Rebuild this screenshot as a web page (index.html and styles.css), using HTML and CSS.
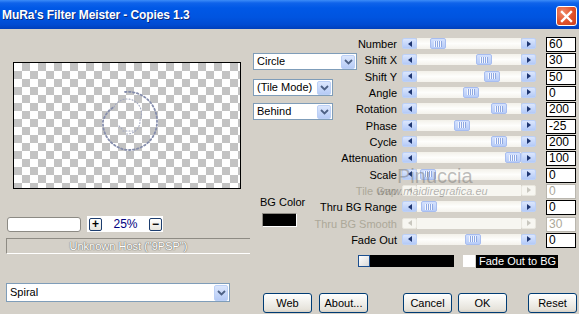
FILE: index.html
```html
<!DOCTYPE html>
<html>
<head>
<meta charset="utf-8">
<title>MuRa's Filter Meister - Copies 1.3</title>
<link rel="stylesheet" href="styles.css">
</head>
<body>
<div class="window">
  <div class="titlebar">
    <span class="title">MuRa's Filter Meister - Copies 1.3</span>
    <span class="close"><svg width="13" height="13" viewBox="0 0 13 13"><path d="M2 2 L11 11 M11 2 L2 11" stroke="#fff" stroke-width="2.4" stroke-linecap="square"/></svg></span>
  </div>
  <div class="client">
    <div class="leftcol">
      <div class="preview">
        <svg class="spiral" width="226" height="125" viewBox="0 0 226 125">
          <path d="M111 29 A29 29 0 0 1 143 58 A28 28 0 0 1 116 87 A27 27 0 0 1 89 58 A24 24 0 0 1 100 44" fill="none" stroke="#858dac" stroke-width="1.8" stroke-dasharray="1.6 2.4" stroke-linecap="round"/>
          <path d="M100 44 A14 14 0 0 1 126 57 A13 13 0 0 1 112 71 M105 63 L108 66 M109 68 L120 68" fill="none" stroke="#a2a8bf" stroke-width="1.1" stroke-dasharray="1 2" stroke-linecap="round"/>
        </svg>
      </div>
      <div class="zoomrow">
        <div class="field"></div>
        <div class="zoombox">
          <span class="zbtn">+</span>
          <span class="pct">25%</span>
          <span class="zbtn">&minus;</span>
        </div>
      </div>
      <div class="status">Unknown Host ("9PSP")</div>
      <div class="select spiralsel"><span class="seltext">Spiral</span><span class="dd"><svg width="9" height="6" viewBox="0 0 9 6"><path d="M1 1 L4.5 4.5 L8 1" fill="none" stroke="#4d6185" stroke-width="1.8"/></svg></span></div>
    </div>
    <div class="rightcol">
      <div class="upper">
        <div class="sliders">
          <div class="row"><span class="lbl">Number</span><div class="sb"><span class="arr l"></span><span class="track"><span class="thumb" style="margin-left:13px"></span></span><span class="arr r"></span></div><span class="val">60</span></div>
          <div class="row"><span class="lbl">Shift X</span><div class="sb"><span class="arr l"></span><span class="track"><span class="thumb" style="margin-left:59px"></span></span><span class="arr r"></span></div><span class="val">30</span></div>
          <div class="row"><span class="lbl">Shift Y</span><div class="sb"><span class="arr l"></span><span class="track"><span class="thumb" style="margin-left:67px"></span></span><span class="arr r"></span></div><span class="val">50</span></div>
          <div class="row"><span class="lbl">Angle</span><div class="sb"><span class="arr l"></span><span class="track"><span class="thumb" style="margin-left:46px"></span></span><span class="arr r"></span></div><span class="val">0</span></div>
          <div class="row"><span class="lbl">Rotation</span><div class="sb"><span class="arr l"></span><span class="track"><span class="thumb" style="margin-left:74px"></span></span><span class="arr r"></span></div><span class="val">200</span></div>
          <div class="row"><span class="lbl">Phase</span><div class="sb"><span class="arr l"></span><span class="track"><span class="thumb" style="margin-left:37px"></span></span><span class="arr r"></span></div><span class="val">-25</span></div>
          <div class="row"><span class="lbl">Cycle</span><div class="sb"><span class="arr l"></span><span class="track"><span class="thumb" style="margin-left:74px"></span></span><span class="arr r"></span></div><span class="val">200</span></div>
          <div class="row"><span class="lbl">Attenuation</span><div class="sb"><span class="arr l"></span><span class="track"><span class="thumb" style="margin-left:88px"></span></span><span class="arr r"></span></div><span class="val">100</span></div>
          <div class="row"><span class="lbl">Scale</span><div class="sb"><span class="arr l"></span><span class="track"><span class="thumb" style="margin-left:3px"></span></span><span class="arr r"></span></div><span class="val">0</span></div>
          <div class="row disabled"><span class="lbl">Tile Gap</span><div class="sb"><span class="arr l"></span><span class="track"></span><span class="arr r"></span></div><span class="val">0</span></div>
          <div class="row"><span class="lbl">Thru BG Range</span><div class="sb"><span class="arr l"></span><span class="track"><span class="thumb" style="margin-left:4px"></span></span><span class="arr r"></span></div><span class="val">0</span></div>
          <div class="row disabled"><span class="lbl">Thru BG Smooth</span><div class="sb"><span class="arr l"></span><span class="track"></span><span class="arr r"></span></div><span class="val">30</span></div>
          <div class="row"><span class="lbl">Fade Out</span><div class="sb"><span class="arr l"></span><span class="track"><span class="thumb" style="margin-left:48px"></span></span><span class="arr r"></span></div><span class="val">0</span></div>
        </div>
        <div class="selects">
          <div class="select circlesel"><span class="seltext">Circle</span><span class="dd"><svg width="9" height="6" viewBox="0 0 9 6"><path d="M1 1 L4.5 4.5 L8 1" fill="none" stroke="#4d6185" stroke-width="1.8"/></svg></span></div>
          <div class="select smallsel tilesel"><span class="seltext">(Tile Mode)</span><span class="dd"><svg width="9" height="6" viewBox="0 0 9 6"><path d="M1 1 L4.5 4.5 L8 1" fill="none" stroke="#4d6185" stroke-width="1.8"/></svg></span></div>
          <div class="select smallsel behindsel"><span class="seltext">Behind</span><span class="dd"><svg width="9" height="6" viewBox="0 0 9 6"><path d="M1 1 L4.5 4.5 L8 1" fill="none" stroke="#4d6185" stroke-width="1.8"/></svg></span></div>
          <div class="bgcolor">
            <span class="bglbl">BG Color</span>
            <span class="swatch"></span>
          </div>
        </div>
      </div>
      <div class="striprow">
        <div class="strip"><span class="stripsq"></span></div>
        <span class="check"></span>
        <span class="checklbl">Fade Out to BG</span>
      </div>
      <div class="buttons">
        <div class="group">
          <span class="btn">Web</span>
          <span class="btn">About...</span>
        </div>
        <div class="group mid">
          <span class="btn">Cancel</span>
          <span class="btn">OK</span>
        </div>
        <span class="btn reset">Reset</span>
      </div>
    </div>
  </div>
  <div class="wm wm1">Pinuccia</div>
  <div class="wm wm2">www.maidiregrafica.eu</div>
</div>
</body>
</html>
```

FILE: styles.css
```css
* { box-sizing: border-box; margin: 0; padding: 0; }
html, body { width: 579px; height: 314px; overflow: hidden; }
body {
  background: #d4d0c8;
  font-family: "Liberation Sans", Arial, sans-serif;
  font-size: 11px;
  color: #000;
}
.window {
  position: relative;
  width: 579px;
  height: 314px;
  display: flex;
  flex-direction: column;
}

/* title bar */
.titlebar {
  height: 29px;
  flex: none;
  display: flex;
  justify-content: space-between;
  align-items: flex-start;
  padding: 0 2px 0 2px;
  background: linear-gradient(#3c8cf8 0, #0f63ea 3px, #0058e6 8px, #0054e0 60%, #004bd2 85%, #003fbb 100%);
}
.title {
  color: #fff;
  font-weight: bold;
  font-size: 12px;
  letter-spacing: -0.1px;
  line-height: 14px;
  margin-top: 8px;
  text-shadow: 1px 1px 0 #0b2a7a;
}
.close {
  width: 21px;
  height: 20px;
  margin-top: 6px;
  margin-right: 0;
  border: 1px solid #fff;
  border-radius: 3px;
  background: radial-gradient(circle at 30% 30%, #f08a68, #e0502a 55%, #c7401e);
  display: flex;
  align-items: center;
  justify-content: center;
}

/* client */
.client { flex: 1; display: flex; }
.leftcol { width: 250px; flex: none; display: flex; flex-direction: column; }
.rightcol { width: 329px; flex: none; display: flex; flex-direction: column; }

.preview {
  margin: 33px 0 0 13px;
  width: 228px;
  height: 127px;
  border: 1px solid #000;
  background: repeating-conic-gradient(#c3c3c3 0 25%, #fff 0 50%) 0 0 / 16px 16px;
}
.spiral { display: block; }

.zoomrow { display: flex; align-items: center; margin-top: 27px; height: 16px; }
.field {
  margin-left: 7px;
  width: 74px;
  height: 15px;
  background: #fff;
  border: 1px solid #8c8a84;
  border-radius: 3px;
}
.zoombox {
  margin-left: 6px;
  width: 76px;
  height: 16px;
  background: #fff;
  display: flex;
  align-items: center;
  padding-left: 2px;
}
.zbtn {
  width: 13px;
  height: 13px;
  border: 1px solid #1c3d6e;
  border-radius: 2px;
  background: linear-gradient(#fff, #e6e4dc);
  font-size: 12px;
  font-weight: bold;
  line-height: 10px;
  text-align: center;
}
.pct {
  width: 47px;
  text-align: center;
  color: #000080;
  font-size: 12px;
  line-height: 14px;
}

.status {
  margin: 6px 0 0 6px;
  height: 16px;
  border-top: 1px solid #8e8b84;
  border-left: 1px solid #8e8b84;
  border-bottom: 1px solid #fff;
  color: #ffffff;
  text-shadow: 0 0 1px #7c7971, 0 0 1px #7c7971, 0 0 1px #7c7971;
  text-align: center;
  line-height: 14px;
  font-size: 11px;
}

/* selects */
.select {
  height: 17px;
  background: #fff;
  border: 1px solid #7f9db9;
  display: flex;
  align-items: center;
  justify-content: space-between;
  padding: 1px 1px 1px 3px;
}
.seltext { font-size: 11px; line-height: 13px; white-space: nowrap; }
.dd {
  width: 14px;
  height: 14px;
  flex: none;
  border-radius: 2px;
  border: 1px solid #bcd0f6;
  background: linear-gradient(#dce7fd, #b6cbf6);
  display: flex;
  align-items: center;
  justify-content: center;
}
.spiralsel { margin: 29px 0 0 6px; width: 224px; height: 19px; }
.spiralsel .dd { height: 16px; }

.upper { display: grid; margin-top: 8px; }
.upper > * { grid-area: 1 / 1; }

.sliders { display: flex; flex-direction: column; padding-right: 3px; }
.row {
  height: 16.33px;
  display: flex;
  justify-content: flex-end;
  align-items: flex-start;
}
.lbl { line-height: 15px; font-size: 11px; white-space: nowrap; }
.sb {
  margin-left: 5px;
  margin-top: 1px;
  width: 134px;
  height: 11px;
  display: flex;
}
.arr {
  width: 15px;
  height: 11px;
  flex: none;
  border: 1px solid #bcd0f7;
  border-radius: 2px;
  background: linear-gradient(#dbe6fd, #b4caf7);
  display: flex;
  align-items: center;
  justify-content: center;
}
.arr::after {
  content: "";
  border-top: 3.5px solid transparent;
  border-bottom: 3.5px solid transparent;
}
.arr.l::after { border-right: 4px solid #1e3672; }
.arr.r::after { border-left: 4px solid #1e3672; }
.track {
  flex: 1;
  height: 11px;
  background: linear-gradient(#f3f1ea, #fefefc 50%, #f4f2ec);
  display: flex;
}
.thumb {
  width: 16px;
  height: 11px;
  border: 1px solid #a7bdf0;
  border-radius: 2px;
  background: linear-gradient(#d4e1fd, #b7ccf8);
  display: flex;
  align-items: center;
  justify-content: center;
}
.thumb::after {
  content: "";
  width: 8px;
  height: 6px;
  background: repeating-linear-gradient(to right, #f4f7ff 0 1px, #8ea8e2 1px 2px);
}
.val {
  margin-left: 10px;
  width: 30px;
  height: 15px;
  background: #fff;
  border: 1px solid #000;
  font-size: 12px;
  line-height: 12px;
  padding-left: 2px;
}
.row.disabled .lbl { color: #aca899; }
.row.disabled .arr { background: #f7f6f1; border-color: #e9e7df; }
.row.disabled .arr.l::after { border-right-color: #c9c7bf; }
.row.disabled .arr.r::after { border-left-color: #c9c7bf; }
.row.disabled .track { background: #f7f6f1; }
.row.disabled .val { color: #aca899; border-color: #b9b6ae; background: #fff; }

.selects { display: flex; flex-direction: column; align-items: flex-start; padding-left: 3px; }
.circlesel { margin-top: 16px; width: 104px; }
.smallsel { width: 80px; }
.tilesel { margin-top: 9px; }
.behindsel { margin-top: 7px; }
.bgcolor { margin: 76px 0 0 7px; display: flex; flex-direction: column; }
.bglbl { line-height: 13px; font-size: 11px; }
.swatch {
  margin: 4px 0 0 2px;
  width: 35px;
  height: 14px;
  background: #000;
  border: 1px solid;
  border-color: #8e8b84 #fff #fff #8e8b84;
}

/* strip row */
.striprow { display: flex; align-items: flex-start; margin-top: 6px; padding-left: 108px; height: 13px; }
.strip { width: 96px; height: 12px; background: #000; display: flex; }
.stripsq {
  width: 12px;
  height: 12px;
  border: 1px solid #1b4e8f;
  background: linear-gradient(135deg, #fff, #d8d8d8);
}
.check { margin-left: 9px; width: 12px; height: 12px; background: #fff; }
.checklbl {
  margin-left: 1px;
  width: 82px;
  height: 13px;
  background: #000;
  color: #fff;
  font-size: 11px;
  line-height: 13px;
  padding-left: 3px;
  white-space: nowrap;
}

/* buttons */
.buttons { display: flex; margin-top: 25px; padding-left: 13px; }
.group { display: flex; gap: 7px; }
.group.mid { margin-left: 35px; gap: 6px; }
.reset { margin-left: 21px; }
.btn {
  width: 49px;
  height: 20px;
  border: 1px solid #003c74;
  border-radius: 3px;
  background: linear-gradient(#fff, #f3f2ee 40%, #e6e3db 85%, #d6d0c5);
  font-size: 11px;
  line-height: 18px;
  text-align: center;
}

/* watermark overlay */
.wm { position: absolute; white-space: nowrap; pointer-events: none; }
.wm1 {
  left: 397px;
  top: 166px;
  font-size: 20px;
  line-height: 20px;
  color: rgba(110, 110, 110, 0.45);
}
.wm2 {
  left: 377px;
  top: 185px;
  font-size: 11px;
  line-height: 12px;
  font-style: italic;
  color: rgba(90, 90, 90, 0.45);
}
```
